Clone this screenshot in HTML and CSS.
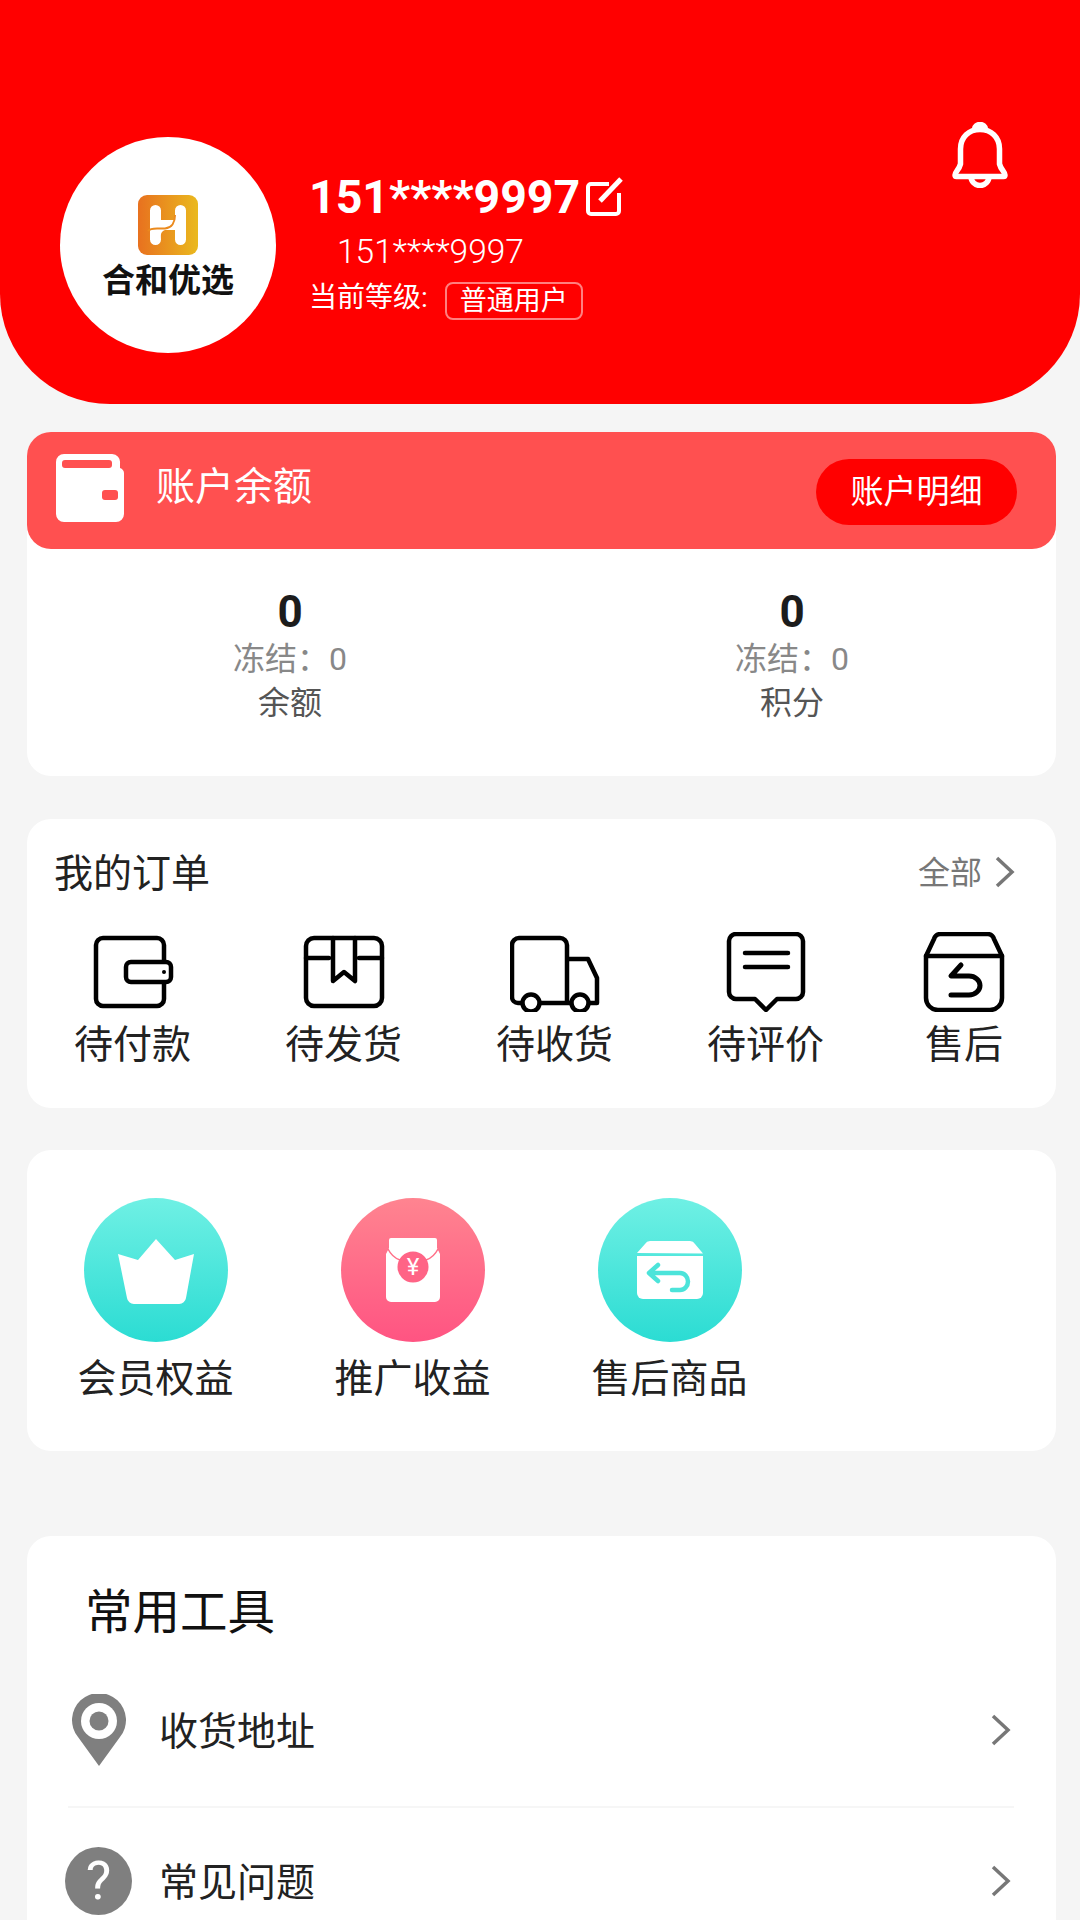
FILE: index.html
```html
<!DOCTYPE html>
<html lang="zh-CN">
<head>
  <meta charset="UTF-8">
  <title>个人中心</title>
  <meta name="viewport" content="width=device-width, initial-scale=1">
  <link rel="stylesheet" href="styles.css">
</head>
<body>

  <header class="top">
    <div class="avatar">
      <svg class="logo-mark" viewBox="0 0 60 60">
        <defs>
          <linearGradient id="logoGrad" x1="0" y1="0" x2="1" y2="0">
            <stop offset="0" stop-color="#e8711f"/>
            <stop offset="1" stop-color="#eab91e"/>
          </linearGradient>
        </defs>
        <rect width="60" height="60" rx="9" fill="url(#logoGrad)"/>
        <path d="M12 15.500a5.500 5.500 0 0 1 11 0V25H37V15.500a5.500 5.500 0 0 1 11 0V44.500a5.500 5.500 0 0 1-11 0V35H27C22 37 23 40 23 44.500a5.500 5.500 0 0 1-11 0V15.500z" fill="#fff"/>
        <path d="M10 36C13 32 20 34 27 33.500C34 33 37 27 37 20" stroke="#eb8a1e" stroke-width="2" fill="none"/>
      </svg>
      <div class="logo-text">合和优选</div>
    </div>
    <div class="info">
      <div class="name">151****9997
        <svg class="edit" viewBox="0 0 38 40" fill="none" stroke="#fff" stroke-width="4">
          <path d="M24 7H6a3 3 0 0 0-3 3v24a3 3 0 0 0 3 3h25a3 3 0 0 0 3-3V16" stroke-linejoin="round"/>
          <path d="M15 24L36 2" stroke-width="5"/>
        </svg>
      </div>
      <div class="phone">151****9997</div>
      <div class="level">当前等级:<span class="tag">普通用户</span></div>
    </div>
    <svg class="bell" viewBox="0 0 56 66" fill="none" stroke="#fff" stroke-width="5.500" stroke-linejoin="round">
      <path d="M3 53c0-3 4-5 5.500-11V27C8.500 15 17 7.500 28 7.500S47.500 15 47.500 27v15C49 48 53 50 53 53c0 1-.5 1.500-1.500 1.500h-47C3.500 54.500 3 54 3 53z"/>
      <path d="M22.500 7a5.500 4.500 0 0 1 11 0"/>
      <path d="M19 54.500a9 9 0 0 0 18 0"/>
    </svg>
  </header>

  <main class="content">
    <section class="card wallet">
      <div class="wallet-bar">
        <svg class="wallet-icon" viewBox="0 0 68 68">
          <path d="M0 8a8 8 0 0 1 8-8h48a8 8 0 0 1 8 9v5a6 6 0 0 1 4 6v40a8 8 0 0 1-8 8H8a8 8 0 0 1-8-8z" fill="#fff"/>
          <rect x="6" y="6" width="50" height="8" rx="3" fill="#ff5050"/>
          <rect x="46" y="36" width="16" height="10" rx="3" fill="#ff5050"/>
        </svg>
        <span class="wallet-title">账户余额</span>
        <span class="wallet-btn">账户明细</span>
      </div>
      <div class="stats">
        <div class="stat">
          <div class="stat-num">0</div>
          <div class="stat-frozen">冻结&#xFF1A;0</div>
          <div class="stat-label">余额</div>
        </div>
        <div class="stat">
          <div class="stat-num">0</div>
          <div class="stat-frozen">冻结&#xFF1A;0</div>
          <div class="stat-label">积分</div>
        </div>
      </div>
    </section>

    <section class="card orders">
      <div class="orders-head">
        <span class="orders-title">我的订单</span>
        <span class="orders-all">全部
          <svg class="chev" viewBox="0 0 20 32" fill="none" stroke="#777" stroke-width="3.500"><path d="M2 2l15 14L2 30"/></svg>
        </span>
      </div>
      <div class="order-list">
        <div class="order-item">
          <div class="order-icon">
            <svg viewBox="0 0 90 80" width="90" height="80" fill="none" stroke="#000" stroke-width="4.500" stroke-linejoin="round">
              <path d="M76 30V13a7 7 0 0 0-7-7H15a7 7 0 0 0-7 7v54a7 7 0 0 0 7 7h54a7 7 0 0 0 7-7V50"/>
              <rect x="38" y="30" width="45" height="20" rx="5" fill="#fff"/>
              <circle cx="76" cy="40" r="2" fill="#000" stroke="none"/>
            </svg>
          </div>
          <span>待付款</span>
        </div>
        <div class="order-item">
          <div class="order-icon">
            <svg viewBox="0 0 90 80" width="90" height="80" fill="none" stroke="#000" stroke-width="4.500" stroke-linejoin="round" stroke-linecap="round">
              <rect x="7" y="6" width="76" height="68" rx="8"/>
              <path d="M7 26h23M60 26h23"/>
              <path d="M34 6v43l11-9 11 9V6"/>
            </svg>
          </div>
          <span>待发货</span>
        </div>
        <div class="order-item">
          <div class="order-icon">
            <svg viewBox="0 0 90 80" width="90" height="80" fill="none" stroke="#000" stroke-width="4.500" stroke-linejoin="round">
              <path d="M12 71H8a6 6 0 0 1-6-6V13a7 7 0 0 1 7-7h41a7 7 0 0 1 7 7v58M31 71h31"/>
              <path d="M57 27h21l9 19v25H79"/>
              <circle cx="21" cy="71" r="8.500"/>
              <circle cx="70" cy="71" r="8.500"/>
            </svg>
          </div>
          <span>待收货</span>
        </div>
        <div class="order-item">
          <div class="order-icon">
            <svg viewBox="0 0 90 80" width="90" height="80" fill="none" stroke="#000" stroke-width="4.500" stroke-linejoin="round" stroke-linecap="round">
              <path d="M15 2h60a7 7 0 0 1 7 7v51a7 7 0 0 1-7 7H56L45 78 34 67H15a7 7 0 0 1-7-7V9a7 7 0 0 1 7-7z"/>
              <path d="M24 21h43M24 35h43"/>
            </svg>
          </div>
          <span>待评价</span>
        </div>
        <div class="order-item">
          <div class="order-icon">
            <svg viewBox="0 0 90 80" width="90" height="80" fill="none" stroke="#000" stroke-width="4.500" stroke-linejoin="round" stroke-linecap="round">
              <path d="M7 24L15 7a7 7 0 0 1 6-5h48a7 7 0 0 1 6 5l8 17v42a12 12 0 0 1-12 12H19A12 12 0 0 1 7 66z"/>
              <path d="M7 24h76"/>
              <path d="M42 33L32 44H50a11 9.500 0 0 1 0 19H32" stroke-width="5"/>
            </svg>
          </div>
          <span>售后</span>
        </div>
      </div>
    </section>

    <section class="card services">
      <div class="service">
        <div class="circle teal">
          <svg class="crown" viewBox="0 0 76 65" width="76" height="65">
            <path d="M38 0L57 21L76 15L68 59a7 7 0 0 1-7 6H16a7 7 0 0 1-7-6L0 15L20 21z" fill="#fff"/>
          </svg>
        </div>
        <span>会员权益</span>
      </div>
      <div class="service">
        <div class="circle pink">
          <svg viewBox="0 0 54 64" width="54" height="64">
            <path d="M5 0H49a2 2 0 0 1 2 2V10L54 16V59a5 5 0 0 1-5 5H5a5 5 0 0 1-5-5V16L3 10V2a2 2 0 0 1 2-2z" fill="#fff"/>
            <path d="M2 11C5 17 8 20 14 22M52 11C49 17 46 20 40 22" fill="none" stroke="#ff7088" stroke-width="1.500"/>
            <circle cx="27" cy="29" r="15.500" fill="#ff6486"/>
            <text class="yen" x="27" y="37" text-anchor="middle">¥</text>
          </svg>
        </div>
        <span>推广收益</span>
      </div>
      <div class="service">
        <div class="circle teal">
          <svg viewBox="0 0 68 58" width="68" height="58" fill="none">
            <path d="M1 12L9 3a6 6 0 0 1 5-3h40a6 6 0 0 1 5 3l8 9.500z" fill="#fff"/>
            <path d="M1 15H67V52a6 6 0 0 1-6 6H7a6 6 0 0 1-6-6z" fill="#fff"/>
            <path d="M22 24l-9 8 9 8M14 32H44a8 8.500 0 0 1 0 17H36" stroke="#4ce4da" stroke-width="4.500" stroke-linecap="round" stroke-linejoin="round"/>
          </svg>
        </div>
        <span>售后商品</span>
      </div>
    </section>

    <section class="card tools">
      <h3 class="tools-title">常用工具</h3>
      <div class="tool-row first">
        <div class="tool-icon">
          <svg viewBox="0 0 54 72" width="54" height="72">
            <path d="M27 72L6 43A27 27 0 1 1 48 43z" fill="#7f7f7f"/>
            <circle cx="27" cy="27" r="18" fill="#fff"/>
            <circle cx="27" cy="27" r="9.500" fill="#7f7f7f"/>
          </svg>
        </div>
        <span class="tool-name">收货地址</span>
        <svg class="chev tool-chev" viewBox="0 0 20 32" fill="none" stroke="#777" stroke-width="3.500"><path d="M2 2l15 14L2 30"/></svg>
      </div>
      <div class="tool-row">
        <div class="tool-icon"><span class="help">?</span></div>
        <span class="tool-name">常见问题</span>
        <svg class="chev tool-chev" viewBox="0 0 20 32" fill="none" stroke="#777" stroke-width="3.500"><path d="M2 2l15 14L2 30"/></svg>
      </div>
    </section>
  </main>

</body>
</html>
```

FILE: styles.css
```css
html, body {
  margin: 0;
  height: 1920px;
  overflow: hidden;
}
body {
  background: #f5f5f5;
  font-family: 'Roboto', 'Noto Sans CJK SC', sans-serif;
  color: #222;
}

/* top red header */
.top {
  box-sizing: border-box;
  height: 404px;
  padding: 122px 72px 0 60px;
  background: #ff0000;
  border-radius: 0 0 110px 110px;
  display: flex;
  align-items: flex-start;
  color: #fff;
}
.avatar {
  width: 216px;
  height: 216px;
  margin-top: 15px;
  flex: none;
  background: #fff;
  border-radius: 50%;
  display: flex;
  flex-direction: column;
  align-items: center;
  padding-top: 58px;
  box-sizing: border-box;
}
.logo-mark {
  width: 60px;
  height: 60px;
  display: block;
}
.logo-text {
  margin-top: 6px;
  font-size: 33px;
  line-height: 40px;
  font-weight: 700;
  color: #111;
  white-space: nowrap;
}
.info {
  margin: 48px 0 0 33px;
}
.name {
  display: flex;
  align-items: center;
  font-size: 46.5px;
  line-height: 54px;
  font-weight: 700;
}
.edit {
  width: 38px;
  height: 40px;
  margin-left: 5px;
}
.phone {
  margin: 8px 0 0 28px;
  font-size: 33.5px;
  line-height: 40px;
  font-weight: 300;
}
.level {
  display: flex;
  align-items: center;
  margin-top: 4px;
  font-size: 28px;
  line-height: 38px;
}
.tag {
  margin: 6px 0 0 17px;
  padding: 0 13px;
  border: 2px solid rgba(255, 255, 255, 0.5);
  border-radius: 8px;
  font-size: 27px;
  line-height: 34px;
}
.bell {
  width: 56px;
  height: 66px;
  margin-left: auto;
}

/* cards */
.content {
  padding: 28px 24px 0 27px;
}
.card {
  background: #fff;
  border-radius: 24px;
}

.wallet {
  height: 344px;
}
.wallet-bar {
  box-sizing: border-box;
  height: 117px;
  padding: 22px 39px 0 29px;
  background: #ff5050;
  border-radius: 24px;
  display: flex;
  align-items: flex-start;
  color: #fff;
}
.wallet-icon {
  width: 68px;
  height: 68px;
  flex: none;
}
.wallet-title {
  margin: 3px 0 0 32px;
  font-size: 39px;
  line-height: 60px;
}
.wallet-btn {
  margin: 5px 0 0 auto;
  width: 201px;
  height: 66px;
  line-height: 66px;
  text-align: center;
  background: #ff0000;
  border-radius: 33px;
  font-size: 33px;
}
.stats {
  display: flex;
  padding-top: 38px;
}
.stat {
  width: 526px;
  text-align: center;
}
.stat + .stat {
  width: 478px;
}
.stat-num {
  font-size: 44px;
  line-height: 50px;
  font-weight: 700;
  color: #1c1c1c;
}
.stat-frozen {
  font-size: 32px;
  line-height: 44px;
  color: #888;
}
.stat-label {
  font-size: 32px;
  line-height: 44px;
  color: #555;
}

.orders {
  box-sizing: border-box;
  height: 289px;
  margin-top: 43px;
}
.orders-head {
  display: flex;
  justify-content: space-between;
  align-items: center;
  padding: 24px 41px 0 27px;
  height: 54px;
}
.orders-title {
  font-size: 39px;
  color: #222;
}
.orders-all {
  display: flex;
  align-items: center;
  font-size: 32px;
  color: #777;
}
.chev {
  width: 20px;
  height: 32px;
}
.orders-all .chev {
  margin: 4px 0 0 13px;
}
.order-list {
  display: flex;
  gap: 94px;
  padding: 35px 0 0 47px;
}
.order-item {
  display: flex;
  flex-direction: column;
  align-items: center;
  font-size: 39px;
  line-height: 52px;
  color: #222;
  white-space: nowrap;
}
.order-item:last-child {
  margin-left: 1px;
}
.order-icon {
  width: 90px;
  height: 80px;
  margin-bottom: 7px;
}

.services {
  box-sizing: border-box;
  height: 301px;
  margin-top: 42px;
  padding-top: 48px;
  display: grid;
  grid-template-columns: repeat(4, 257px);
}
.service {
  display: flex;
  flex-direction: column;
  align-items: center;
  font-size: 39px;
  line-height: 52px;
  color: #222;
  white-space: nowrap;
}
.circle {
  width: 144px;
  height: 144px;
  border-radius: 50%;
  margin-bottom: 11px;
  display: flex;
  align-items: center;
  justify-content: center;
}
.crown {
  margin-top: 2px;
}
.teal {
  background: linear-gradient(#6ff0e4, #2bdcd3);
}
.pink {
  background: linear-gradient(#ff8490, #ff5482);
}
.yen {
  font-size: 24px;
  fill: #fff;
  font-family: 'Roboto', sans-serif;
}

.tools {
  margin-top: 85px;
  height: 500px;
}
.tools-title {
  margin: 0;
  padding: 45px 0 0 58px;
  font-size: 47.5px;
  line-height: 64px;
  font-weight: 400;
  color: #111;
}
.tool-row {
  display: flex;
  align-items: center;
  height: 146px;
  margin: 0 42px 0 38px;
}
.tool-row.first {
  height: 152px;
  margin-top: 9px;
  margin-left: 41px;
  margin-right: 42px;
  border-bottom: 2px solid #f6f6f6;
}
.tool-row.first .tool-icon {
  margin-left: -3px;
}
.tool-icon {
  width: 67px;
  height: 72px;
  flex: none;
  display: flex;
  align-items: center;
  justify-content: center;
}
.tool-name {
  margin-left: 27px;
  padding-bottom: 5px;
  font-size: 39px;
  color: #222;
}
.tool-chev {
  margin-left: auto;
  margin-right: 3px;
}
.help {
  width: 68px;
  height: 68px;
  background: #7f7f7f;
  border-radius: 50%;
  color: #fff;
  font-size: 54px;
  line-height: 68px;
  text-align: center;
  font-weight: 400;
}
```
